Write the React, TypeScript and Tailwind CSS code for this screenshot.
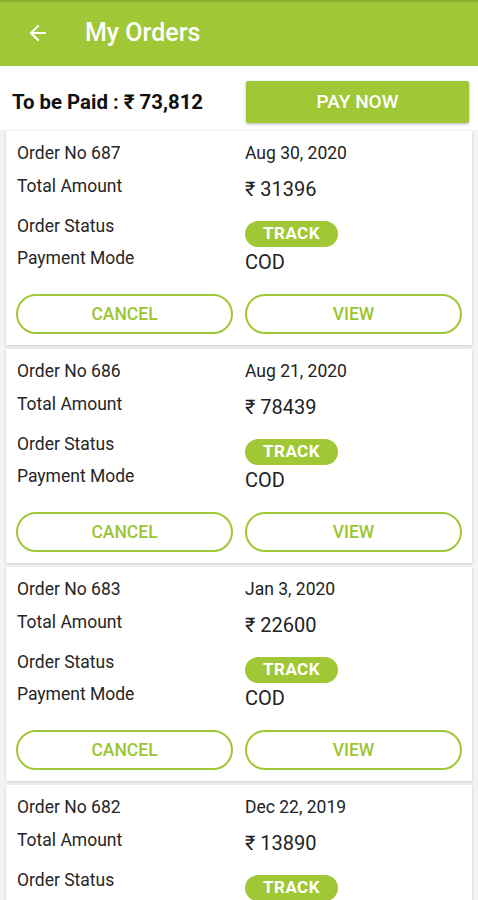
import { ArrowLeft } from 'lucide-react';

type Order = {
  no: number;
  date: string;
  amount: string;
};

const orders: Order[] = [
  { no: 687, date: 'Aug 30, 2020', amount: '31396' },
  { no: 686, date: 'Aug 21, 2020', amount: '78439' },
  { no: 683, date: 'Jan 3, 2020', amount: '22600' },
  { no: 682, date: 'Dec 22, 2019', amount: '13890' },
];

function OrderCard({ order }: { order: Order }) {
  return (
    <div className="mx-[6px] bg-white px-[10px] pt-[8px] pb-[11px] shadow-[0_1px_3px_rgba(0,0,0,0.18)]">
      <div className="grid grid-cols-2 gap-x-[12px]">
        <div className="flex flex-col pl-[1px] text-[17.5px] text-[#262626]">
          <div className="flex h-[28px] items-center">Order No {order.no}</div>
          <div className="flex h-[38px] items-center">Total Amount</div>
          <div className="flex h-[42px] items-center">Order Status</div>
          <div className="flex h-[22px] items-center">Payment Mode</div>
        </div>
        <div className="flex flex-col text-[#222]">
          <div className="flex h-[28px] items-center text-[17.5px]">{order.date}</div>
          <div className="flex h-[44px] items-center text-[20px]">₹ {order.amount}</div>
          <div className="mt-[10px] flex h-[26px] w-[93px] items-center justify-center rounded-full bg-[#a0c836] text-[17px] font-bold tracking-wide text-white">
            TRACK
          </div>
          <div className="flex h-[30px] items-center text-[20px]">COD</div>
        </div>
      </div>
      <div className="mt-[17px] grid grid-cols-2 gap-x-[12px]">
        <button className="flex h-[40px] items-center justify-center rounded-full border-2 border-[#a0c836] text-[17.5px] font-medium text-[#9cc432]">
          CANCEL
        </button>
        <button className="flex h-[40px] items-center justify-center rounded-full border-2 border-[#a0c836] text-[17.5px] font-medium text-[#9cc432]">
          VIEW
        </button>
      </div>
    </div>
  );
}

export default function App() {
  return (
    <div className="h-[900px] w-[478px] overflow-hidden bg-white font-['Roboto',sans-serif]">
      <header className="flex h-[66px] items-center bg-[#a0c836] shadow-[inset_0_3px_2px_-1px_rgba(0,0,0,0.15)]">
        <ArrowLeft className="ml-[26px] h-[24px] w-[24px] text-white" strokeWidth={2.2} />
        <h1 className="ml-[35px] text-[25px] font-medium text-white">My Orders</h1>
      </header>

      <div className="flex h-[64px] items-start pt-[15px]">
        <div className="flex h-[42px] w-[246px] items-center pl-[12px] text-[20.4px] font-bold text-[#111]">
          To be Paid : ₹ 73,812
        </div>
        <button className="flex h-[42px] w-[223px] items-center justify-center rounded-[2px] bg-[#a0c836] text-[19px] font-medium text-white shadow-[0_1px_3px_rgba(0,0,0,0.3)]">
          PAY NOW
        </button>
      </div>

      <div className="flex flex-col gap-[4px] bg-[#f4f4f4] pt-[1px]">
        {orders.map((order) => (
          <OrderCard key={order.no} order={order} />
        ))}
      </div>
    </div>
  );
}
